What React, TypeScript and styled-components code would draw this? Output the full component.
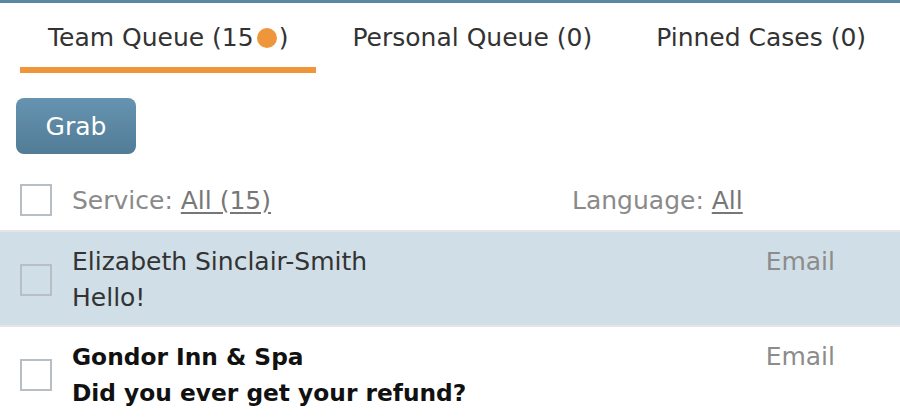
import * as React from 'react';
import styled, { createGlobalStyle } from 'styled-components';

const GlobalStyle = createGlobalStyle`
  body {
    margin: 0;
    background: #fff;
    font-family: "DejaVu Sans", Lato, sans-serif;
  }
`;

const Wrapper = styled.div`
  width: 900px;
  border-top: 3px solid #5b87a2;
  background: #fff;
`;

const Tabs = styled.div`
  display: flex;
  gap: 8px;
  padding-left: 20px;
`;

const Tab = styled.div<{ $active?: boolean }>`
  padding: 20px 28px 14px;
  font-size: 25px;
  line-height: 30px;
  color: #333;
  white-space: nowrap;
  border-bottom: 6px solid ${props => (props.$active ? '#f0963a' : 'transparent')};
  display: flex;
  align-items: center;
`;

const Dot = styled.span`
  display: inline-block;
  width: 20px;
  height: 20px;
  border-radius: 50%;
  background: #f0963a;
  margin: 0 2px 0 3px;
`;

const GrabButton = styled.button`
  margin: 25px 0 0 16px;
  width: 120px;
  height: 56px;
  border: none;
  border-radius: 8px;
  background: linear-gradient(#6693b0, #517c96);
  color: #fff;
  font-family: inherit;
  font-size: 25px;
  cursor: pointer;
`;

const FilterBar = styled.div`
  display: grid;
  grid-template-columns: 32px 480px auto;
  column-gap: 20px;
  align-items: center;
  padding-left: 20px;
  margin: 30px 0 14px;
  font-size: 25px;
  color: #8a8a8a;
`;

const FilterLink = styled.span`
  color: #777;
  text-decoration: underline;
  text-underline-offset: 3px;
`;

const Box = styled.span`
  box-sizing: border-box;
  display: block;
  width: 32px;
  height: 32px;
  border: 2px solid #b7bfc4;
`;

const List = styled.div`
  border-top: 2px solid #e5e5e5;
`;

const Row = styled.div<{ $selected?: boolean; $unread?: boolean }>`
  display: grid;
  grid-template-columns: 32px 1fr auto;
  column-gap: 20px;
  align-items: center;
  padding: 12px 65px 9px 20px;
  background: ${props => (props.$selected ? '#d0dee7' : '#fff')};
  border-bottom: 2px solid #e5e5e5;
  font-size: 25px;
  line-height: 36px;
  color: ${props => (props.$unread ? '#111' : '#333')};
`;

const Lines = styled.div<{ $unread?: boolean }>`
  display: flex;
  flex-direction: column;
  font-weight: ${props => (props.$unread ? 700 : 400)};
  font-size: ${props => (props.$unread ? '23.3px' : '25px')};
`;

const Channel = styled.div`
  align-self: start;
  color: #8c8c8c;
`;

const cases = [
  { name: 'Elizabeth Sinclair-Smith', message: 'Hello!', channel: 'Email', selected: true, unread: false },
  { name: 'Gondor Inn & Spa', message: 'Did you ever get your refund?', channel: 'Email', selected: false, unread: true },
];

export default function App() {
  return (
    <Wrapper>
      <GlobalStyle />
      <Tabs>
        <Tab $active>Team Queue (15<Dot />)</Tab>
        <Tab>Personal Queue (0)</Tab>
        <Tab>Pinned Cases (0)</Tab>
      </Tabs>
      <GrabButton>Grab</GrabButton>
      <FilterBar>
        <Box />
        <span>Service: <FilterLink>All (15)</FilterLink></span>
        <span>Language: <FilterLink>All</FilterLink></span>
      </FilterBar>
      <List>
        {cases.map(c => (
          <Row key={c.name} $selected={c.selected} $unread={c.unread}>
            <Box />
            <Lines $unread={c.unread}>
              <span>{c.name}</span>
              <span>{c.message}</span>
            </Lines>
            <Channel>{c.channel}</Channel>
          </Row>
        ))}
      </List>
    </Wrapper>
  );
}
